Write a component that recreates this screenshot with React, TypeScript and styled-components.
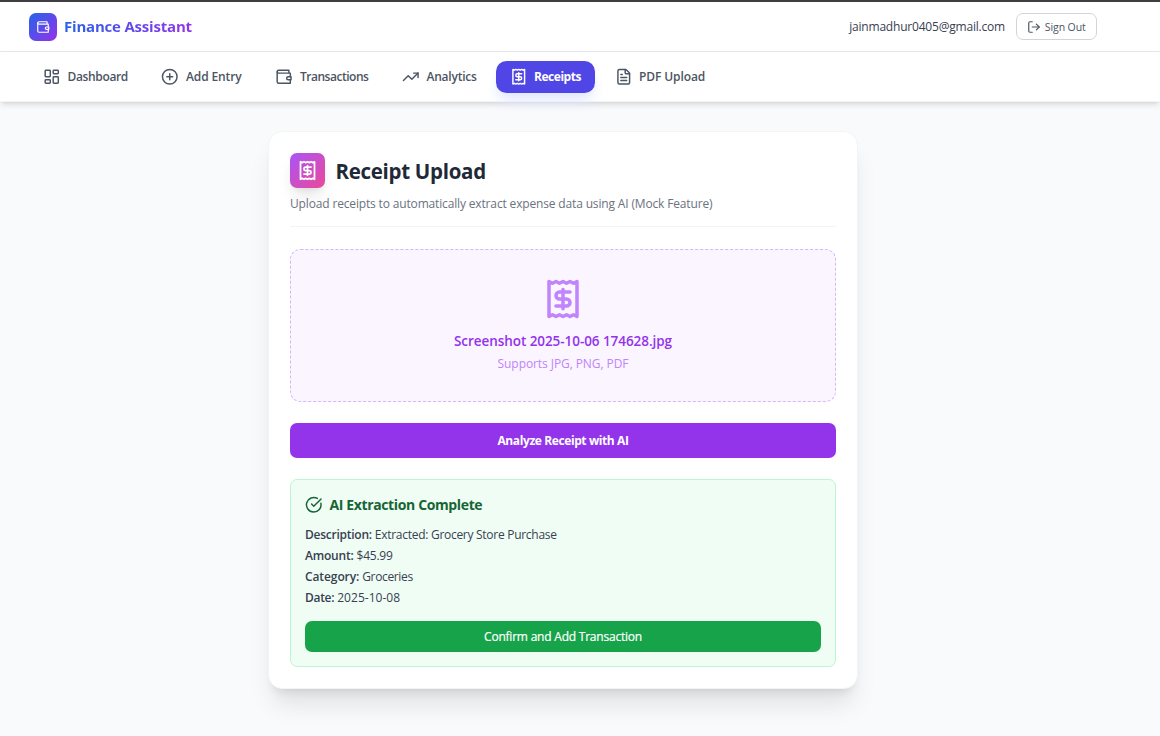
import React from "react";
import styled, { createGlobalStyle, css } from "styled-components";
import { LayoutDashboard, CirclePlus, TrendingUp, FileText, LogOut, CircleCheckBig } from "lucide-react";

const Global = createGlobalStyle`
  *, *::before, *::after { box-sizing: border-box; }
  html { font-size: 14px; }
  body { margin: 0; background: #f9fafc; font-family: "Open Sans", "Noto Sans", sans-serif; color: #374151; }
  h1, h2, h3, p { margin: 0; }
  button { font-family: inherit; border: 0; margin: 0; cursor: pointer; }
  svg { display: block; flex: none; }
`;

const Page = styled.div`
  height: 736px;
  overflow: hidden;
  display: flex;
  flex-direction: column;
  background: #f9fafc;
  border-top: 2px solid #403e41;
`;

const Header = styled.header`
  height: 50px;
  flex: none;
  display: flex;
  align-items: center;
  justify-content: space-between;
  padding: 0 63px 0 29px;
  background: #fff;
  border-bottom: 1px solid #e5e7eb;
`;

const Brand = styled.div`
  display: flex;
  align-items: center;
  gap: 7px;
`;

const BrandMark = styled.div`
  width: 28px;
  height: 28px;
  border-radius: 7px;
  display: flex;
  align-items: center;
  justify-content: center;
  color: #fff;
  background: linear-gradient(to bottom right, #2563eb, #9333ea);
`;

interface LabelProps { $size: number; $weight?: number; $spacing?: number; $color?: string; }
const Label = styled.span<LabelProps>`
  display: inline-block;
  white-space: pre;
  font-size: ${p => p.$size}px;
  font-weight: ${p => p.$weight ?? 400};
  letter-spacing: ${p => p.$spacing ?? 0}px;
  ${p => p.$color && css`color: ${p.$color};`}
`;

const BrandName = styled(Label)`
  margin-bottom: 2px;
  color: transparent;
  background: linear-gradient(to right, #2563eb, #9333ea);
  background-clip: text;
`;

const Account = styled.div`
  display: flex;
  align-items: center;
  gap: 11px;
`;

const SignOut = styled.button`
  height: 27px;
  width: 81px;
  display: flex;
  align-items: center;
  justify-content: center;
  gap: 3.5px;
  padding: 0;
  color: #4b5563;
  background: #fff;
  border: 1px solid #d1d5db;
  border-radius: 7px;
`;

const Nav = styled.nav`
  height: 50px;
  flex: none;
  display: flex;
  align-items: center;
  gap: 3.5px;
  padding: 0 28px;
  background: #fff;
  border-bottom: 1px solid #f3f4f6;
  box-shadow: 0 4px 6px -1px rgba(0, 0, 0, 0.1), 0 2px 4px -2px rgba(0, 0, 0, 0.1);
`;

const NavItem = styled.a<{ $width: number; $gap: number; $inset?: number; $active?: boolean }>`
  width: ${p => p.$width}px;
  height: 32px;
  flex: none;
  display: flex;
  align-items: center;
  gap: ${p => p.$gap}px;
  padding-left: ${p => p.$inset ?? 15}px;
  border-radius: 10.5px;
  color: ${p => (p.$active ? "#fff" : "#4b5563")};
  ${p => p.$active && css`
    background: #4f46e5;
    box-shadow: 0 10px 15px -3px #e0e7ff, 0 4px 6px -4px #e0e7ff;
  `}
`;

const Main = styled.main`
  flex: 1;
  padding: 29px 0 0 268px;
`;

const Card = styled.section`
  width: 590px;
  height: 558px;
  padding: 21px;
  background: #fff;
  border: 1px solid #f3f4f6;
  border-radius: 14px;
  box-shadow: 0 20px 25px -5px rgba(0, 0, 0, 0.1), 0 8px 10px -6px rgba(0, 0, 0, 0.1);
`;

const CardHeader = styled.header`
  height: 74px;
  border-bottom: 1px solid #f3f4f6;
  margin-bottom: 22px;
`;

const TitleRow = styled.div`
  display: flex;
  align-items: center;
  gap: 10.5px;
  height: 35px;
  margin-bottom: 6px;
`;

const TitleMark = styled.div`
  width: 35px;
  height: 35px;
  border-radius: 7px;
  display: flex;
  align-items: center;
  justify-content: center;
  color: #fff;
  background: linear-gradient(to bottom right, #a855f7, #ec4899);
  box-shadow: 0 10px 15px -3px rgba(0, 0, 0, 0.1), 0 4px 6px -4px rgba(0, 0, 0, 0.1);
`;

const Line = styled.div<{ $height: number }>`
  height: ${p => p.$height}px;
  line-height: ${p => p.$height}px;
`;

const DropZone = styled.div`
  height: 153px;
  display: flex;
  flex-direction: column;
  align-items: center;
  padding-top: 28px;
  border: 1px dashed #d8b4fe;
  border-radius: 10.5px;
  background: #faf5ff;
  color: #c084fc;
`;

const FileName = styled(Line)`
  margin-top: 10px;
  margin-bottom: 2px;
`;

const Analyze = styled.button`
  display: block;
  width: 100%;
  height: 35px;
  margin: 21px 0;
  padding: 0 0 2px;
  border-radius: 7px;
  background: #9333ea;
  color: #fff;
`;

const Result = styled.section`
  height: 188px;
  padding: 13px 14px;
  border: 1px solid #bbf7d0;
  border-radius: 7px;
  background: #f0fdf4;
`;

const ResultTitle = styled.h3`
  display: flex;
  align-items: center;
  gap: 7px;
  height: 24px;
  margin-bottom: 7px;
  color: #166534;
`;

const ResultHeading = styled(Label)`
  margin-bottom: 2px;
`;

const Field = styled.p`
  display: flex;
  gap: 3px;
  height: 21px;
  line-height: 21px;
  color: #374151;
`;

const Confirm = styled.button`
  display: block;
  width: 100%;
  height: 31px;
  margin-top: 13px;
  padding: 0 0 2px;
  border-radius: 7px;
  background: #16a34a;
  color: #fff;
  -webkit-text-stroke: 0.2px #fff;
`;

const Glyph = styled.svg.attrs({
  viewBox: "0 0 24 24",
  fill: "none",
  stroke: "currentColor",
  strokeWidth: 2,
  strokeLinecap: "round",
  strokeLinejoin: "round",
})``;

const WalletIcon = ({ size }: { size: number }) => (
  <Glyph width={size} height={size}>
    <path d="M21 12V7H5a2 2 0 0 1 0-4h14v4" />
    <path d="M3 5v14a2 2 0 0 0 2 2h16v-5" />
    <path d="M18 12a2 2 0 0 0 0 4h4v-4Z" />
  </Glyph>
);

const ReceiptIcon = ({ size }: { size: number }) => (
  <Glyph width={size} height={size}>
    <path d="M4 2v20l2-1 2 1 2-1 2 1 2-1 2 1 2-1 2 1V2l-2 1-2-1-2 1-2-1-2 1-2-1-2 1Z" />
    <path d="M16 8h-6a2 2 0 1 0 0 4h4a2 2 0 1 1 0 4H8" />
    <path d="M12 17.5v-11" />
  </Glyph>
);

const navItems = [
  { label: "Dashboard", width: 114, gap: 7, icon: LayoutDashboard, spacing: -0.35 },
  { label: "Add Entry", width: 111, gap: 8, icon: CirclePlus, spacing: -0.12 },
  { label: "Transactions", width: 123, gap: 7.5, icon: WalletIcon, spacing: -0.48 },
  { label: "Analytics", width: 106, gap: 7.5, icon: TrendingUp, spacing: -0.22 },
  { label: "Receipts", width: 99, gap: 6.5, inset: 14, icon: ReceiptIcon, spacing: -0.47, active: true },
  { label: "PDF Upload", width: 120, gap: 7, inset: 16, icon: FileText, spacing: -0.1 },
];

const fields = [
  { name: "Description:", value: "Extracted: Grocery Store Purchase", nameSpacing: -0.25, spacing: -0.28 },
  { name: "Amount:", value: "$45.99", nameSpacing: -0.2, spacing: -0.25 },
  { name: "Category:", value: "Groceries", nameSpacing: -0.1, spacing: -0.35 },
  { name: "Date:", value: "2025-10-08", nameSpacing: -0.3, spacing: 0.03 },
];

export default function App() {
  return (
    <>
      <Global />
      <Page>
        <Header>
          <Brand>
            <BrandMark><WalletIcon size={14} /></BrandMark>
            <BrandName $size={15} $weight={700} $spacing={-0.2}>Finance Assistant</BrandName>
          </Brand>
          <Account>
            <Label $size={12} $spacing={-0.2}>jainmadhur0405@gmail.com</Label>
            <SignOut><LogOut size={14} /><Label $size={10.5} $spacing={-0.1}>Sign Out</Label></SignOut>
          </Account>
        </Header>
        <Nav>
          {navItems.map(({ label, width, gap, inset, icon: Icon, active, spacing }) => (
            <NavItem key={label} $width={width} $gap={gap} $inset={inset} $active={active}>
              <Icon size={17.5} />
              <Label $size={12} $weight={active ? 700 : 600} $spacing={spacing}>{label}</Label>
            </NavItem>
          ))}
        </Nav>
        <Main>
          <Card>
            <CardHeader>
              <TitleRow>
                <TitleMark><ReceiptIcon size={21} /></TitleMark>
                <Label as="h1" $size={20.5} $weight={700} $spacing={-0.3} $color="#1f2937">Receipt Upload</Label>
              </TitleRow>
              <Line $height={18}><Label $size={12} $spacing={-0.155} $color="#6b7280">Upload receipts to automatically extract expense data using AI (Mock Feature)</Label></Line>
            </CardHeader>
            <DropZone>
              <ReceiptIcon size={42} />
              <FileName $height={21}><Label $size={13.5} $weight={600} $spacing={-0.06} $color="#9333ea">Screenshot 2025-10-06 174628.jpg</Label></FileName>
              <Line $height={20}><Label $size={12} $spacing={-0.08}>Supports JPG, PNG, PDF</Label></Line>
            </DropZone>
            <Analyze><Label $size={12} $weight={700} $spacing={-0.4}>Analyze Receipt with AI</Label></Analyze>
            <Result>
              <ResultTitle><CircleCheckBig size={17.5} /><ResultHeading $size={14} $weight={700} $spacing={-0.37}>AI Extraction Complete</ResultHeading></ResultTitle>
              {fields.map(f => (
                <Field key={f.name}>
                  <Label $size={12} $weight={600} $spacing={f.nameSpacing}>{f.name}</Label>
                  <Label $size={12} $spacing={f.spacing}>{f.value}</Label>
                </Field>
              ))}
              <Confirm><Label $size={12} $weight={500} $spacing={-0.22}>Confirm and Add Transaction</Label></Confirm>
            </Result>
          </Card>
        </Main>
      </Page>
    </>
  );
}
